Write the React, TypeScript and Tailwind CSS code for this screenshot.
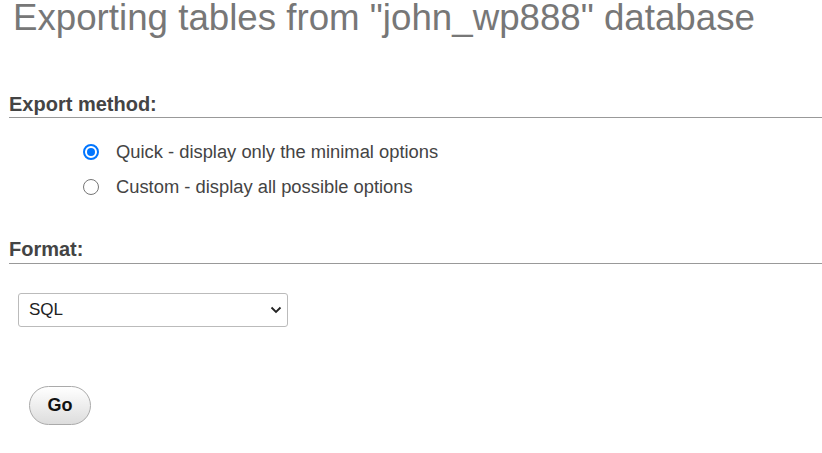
import React, { useState } from "react";

const options = [
  { id: "quick", label: "Quick - display only the minimal options" },
  { id: "custom", label: "Custom - display all possible options" },
];

const App: React.FC = () => {
  const [method, setMethod] = useState("quick");

  return (
    <div className="min-h-screen bg-white pl-[9px] font-['Liberation_Sans',Arial,sans-serif]">
      <h1 className="pl-[4px] text-[36.7px] leading-[36px] text-[#777] whitespace-nowrap">
        Exporting tables from "john_wp888" database
      </h1>

      <h3 className="mt-[58px] border-b border-[#999] pb-[3px] text-[20px] font-bold leading-[20px] text-[#444]">
        Export method:
      </h3>
      <div className="mt-[16px] ml-[74px]">
        {options.map((opt) => (
          <label
            key={opt.id}
            className="flex h-[35px] cursor-pointer items-center gap-[17px]"
            onClick={() => setMethod(opt.id)}
          >
            {method === opt.id ? (
              <span className="flex h-4 w-4 items-center justify-center rounded-full border-2 border-[#0075ff]">
                <span className="h-2 w-2 rounded-full bg-[#0075ff]" />
              </span>
            ) : (
              <span className="h-4 w-4 rounded-full border border-[#767676]" />
            )}
            <span className="text-[18.35px] text-[#444]">{opt.label}</span>
          </label>
        ))}
      </div>

      <h3 className="mt-[35px] border-b border-[#999] pb-[4px] text-[20px] font-bold leading-[20px] text-[#444]">
        Format:
      </h3>
      <div className="relative mt-[29px] ml-[9px] w-[270px]">
        <select className="h-[34px] w-full appearance-none rounded-[3px] border border-[#bbb] bg-white pl-[10px] text-[17px] text-[#222] outline-none">
          <option>SQL</option>
          <option>CSV</option>
          <option>JSON</option>
        </select>
        <svg
          className="pointer-events-none absolute right-[6px] top-[13px]"
          width="12"
          height="8"
          viewBox="0 0 12 8"
        >
          <path d="M1.5 1.5 L6 6 L10.5 1.5" fill="none" stroke="#222" strokeWidth="1.8" />
        </svg>
      </div>

      <button className="mt-[59px] ml-[20px] h-[39px] w-[62px] rounded-full border border-[#aaa] bg-gradient-to-b from-white to-[#ddd] text-[18px] font-bold text-[#111]">
        Go
      </button>
    </div>
  );
};

export default App;
